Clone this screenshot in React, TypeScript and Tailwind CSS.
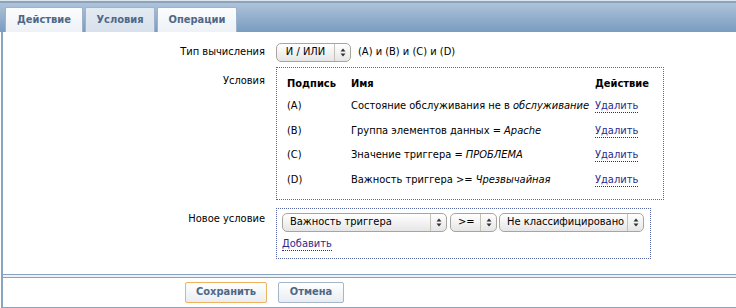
import React from 'react';

const font = "font-['DejaVu_Sans_Condensed','DejaVu_Sans',Verdana,sans-serif]";

const conditions = [
  { label: '(A)', name: 'Состояние обслуживания не в ', value: 'обслуживание' },
  { label: '(B)', name: 'Группа элементов данных = ', value: 'Apache' },
  { label: '(C)', name: 'Значение триггера = ', value: 'ПРОБЛЕМА' },
  { label: '(D)', name: 'Важность триггера >= ', value: 'Чрезвычайная' },
];

/** Mac-style select lookalike: rounded gray pill with a stepper arrow on the right. */
const FakeSelect: React.FC<{ text: string; width: string; center?: boolean }> = ({ text, width, center }) => (
  <span
    className={`inline-flex h-[19px] items-center rounded-[5px] border border-[#a8a69c] bg-gradient-to-b from-[#ffffff] to-[#e6e6e6] text-[11px] text-black ${width}`}
  >
    <span className={`flex-1 overflow-hidden whitespace-nowrap px-[7px] ${center ? 'text-center' : ''}`}>{text}</span>
    <span className="flex h-full w-[16px] shrink-0 flex-col items-center justify-center border-l border-[#c4c2b8] leading-none">
      <svg width="6" height="9" viewBox="0 0 6 9">
        <path d="M3 0.5 L5.5 3.5 H0.5 Z" fill="#333" />
        <path d="M3 8.5 L5.5 5.5 H0.5 Z" fill="#333" />
      </svg>
    </span>
  </span>
);

const DeleteLink: React.FC<{ text: string }> = ({ text }) => (
  <a className="cursor-pointer border-b border-dotted border-[#2b2b8c] text-[#2b2b8c]">{text}</a>
);

const Tab: React.FC<{ text: string; active?: boolean; width: string }> = ({ text, active, width }) => (
  <div
    className={`flex h-[25px] items-center justify-center rounded-t-[2px] border border-b-0 border-[#9db3cb] text-[11px] font-bold text-[#4f6887] ${width} ${
      active ? 'bg-gradient-to-b from-[#e3eaf2] to-[#d8e1ec]' : 'bg-gradient-to-b from-[#fbfcfd] to-[#eef2f6]'
    }`}
  >
    {text}
  </div>
);

export default function App() {
  return (
    <div className={`h-[308px] w-[736px] overflow-hidden bg-white ${font}`}>
      <div className="border-t border-[#dde4ec]">
        <div className="flex h-[31px] items-end gap-[2px] border-t-2 border-[#8aa3bf] bg-gradient-to-b from-[#aec3d9] to-[#7a9cc0] pl-[5px]">
          <Tab text="Действие" width="w-[78px]" />
          <Tab text="Условия" active width="w-[70px]" />
          <Tab text="Операции" width="w-[80px]" />
        </div>
      </div>

      <div className="ml-[1px] border-l-2 border-[#8aa3bf]">
        <div className="grid h-[242px] grid-cols-[262px_1fr] content-start gap-x-[11px] pt-[10px] text-[11px] text-black">
          <div className="flex h-[20px] items-center justify-end">Тип вычисления</div>
          <div className="flex h-[20px] items-center gap-[7px]">
            <FakeSelect text="И / ИЛИ" width="w-[75px]" center />
            <span>(A) и (B) и (C) и (D)</span>
          </div>

          <div className="mt-[5px] pt-[6px] text-right">Условия</div>
          <div className="mt-[5px] w-[388px] border border-dotted border-[#5565a8] px-[10px] pb-[7px] pt-[6px]">
            <table className="w-full border-collapse">
              <thead>
                <tr className="h-[20px] text-left font-bold">
                  <th className="w-[64px] font-bold">Подпись</th>
                  <th className="font-bold">Имя</th>
                  <th className="w-[58px] font-bold">Действие</th>
                </tr>
              </thead>
              <tbody>
                {conditions.map((c) => (
                  <tr key={c.label} className="h-[24.5px]">
                    <td>{c.label}</td>
                    <td className="whitespace-nowrap">
                      {c.name}
                      <i>{c.value}</i>
                    </td>
                    <td>
                      <DeleteLink text="Удалить" />
                    </td>
                  </tr>
                ))}
              </tbody>
            </table>
          </div>

          <div className="mt-[8px] pt-[3px] text-right">Новое условие</div>
          <div className="mt-[8px] w-[375px] border border-dotted border-[#5565a8] px-[5px] pb-[5px] pt-[4px]">
            <div className="flex">
              <FakeSelect text="Важность триггера" width="w-[165px]" />
              <span className="ml-[3px]">
                <FakeSelect text=">=" width="w-[47px]" center />
              </span>
              <span className="ml-[2px]">
                <FakeSelect text="Не классифицировано" width="w-[145px]" />
              </span>
            </div>
            <div className="mt-[4px]">
              <DeleteLink text="Добавить" />
            </div>
          </div>
        </div>

        <div className="h-[4px] border-y border-[#8aa3bf] bg-[#eef1f5]" />
        <div className="flex h-[31px] items-center gap-[11px] border-b-2 border-[#8aa3bf] pl-[182px]">
          <button className="h-[21px] w-[82px] rounded-[2px] border border-[#f0b25c] bg-gradient-to-b from-[#ffffff] to-[#e9edf2] text-[11px] font-bold text-[#4f6887]">
            Сохранить
          </button>
          <button className="h-[21px] w-[66px] rounded-[2px] border border-[#a5b6c9] bg-gradient-to-b from-[#ffffff] to-[#e9edf2] text-[11px] font-bold text-[#4f6887]">
            Отмена
          </button>
        </div>
      </div>
    </div>
  );
}
